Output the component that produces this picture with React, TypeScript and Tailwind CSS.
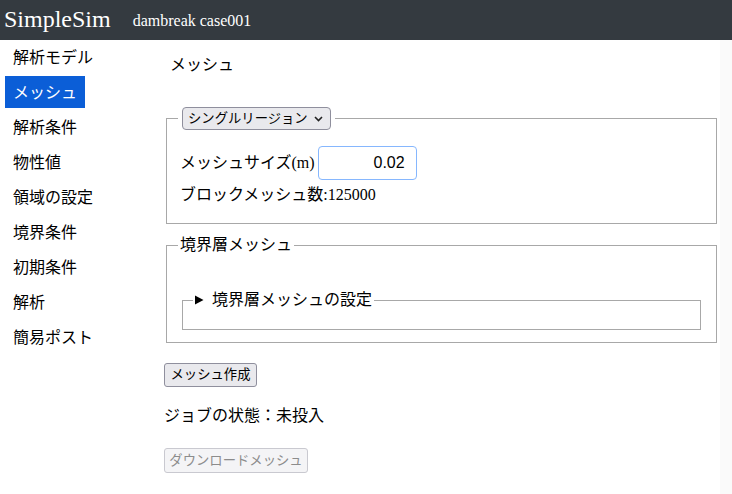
import React from "react";

const navItems = ["解析モデル", "メッシュ", "解析条件", "物性値", "領域の設定", "境界条件", "初期条件", "解析", "簡易ポスト"];
const font = "font-['Liberation_Serif','Noto_Sans_CJK_JP',serif]";
const btnFont = "font-['Liberation_Sans','Noto_Sans_CJK_JP',sans-serif]";

export default function App() {
  return (
    <div className={`w-[732px] h-[494px] bg-white text-black ${font} overflow-hidden flex flex-col`}>
      <header className="h-[40px] bg-[#343a40] text-white flex items-center shrink-0">
        <span className="ml-[4px] text-[24px] leading-[30px] -mt-[2px]">SimpleSim</span>
        <span className="ml-[22px] text-[16px] leading-[20px] mt-[1px]">dambreak case001</span>
      </header>

      <div className="flex flex-1">
        <nav className="w-[164px] shrink-0 pt-[1px] flex flex-col gap-[3px]">
          {navItems.map((item) => (
            <div
              key={item}
              className={
                "ml-[5px] w-fit px-[8px] pt-[7px] pb-[5px] text-[16px] leading-[20px] " +
                (item === "メッシュ" ? "bg-[#0b5ed7] text-white" : "")
              }
            >
              {item}
            </div>
          ))}
        </nav>

        <main className="flex-1 pr-[3px]">
          <h2 className="ml-[6px] mt-[15px] text-[16px] leading-[20px] font-normal">メッシュ</h2>

          <fieldset className="mt-[32px] ml-[2px] border border-[#a8a8a8] pl-[13px] pb-[18px]">
            <legend className="-ml-[2px] px-[4px]">
              <div className={`${btnFont} h-[23px] w-[149px] flex items-center justify-between pl-[5px] pr-[7px] bg-[#e9e9ed] border border-[#8f8f9d] rounded-[4px] text-[13.33px] leading-[16px]`}>
                <span>シングルリージョン</span>
                <svg width="9" height="6" viewBox="0 0 9 6">
                  <path d="M1 1 L4.5 4.5 L8 1" stroke="#222" strokeWidth="1.6" fill="none" />
                </svg>
              </div>
            </legend>
            <div className="mt-[16px] flex items-center text-[16px] leading-[20px]">
              <span>メッシュサイズ(m)</span>
              <div className={`${btnFont} ml-[3px] w-[99px] h-[34px] border border-[#86b7fe] rounded-[4px] flex items-center justify-end pr-[11px] text-[16px]`}>
                0.02
              </div>
            </div>
            <div className="mt-[5px] text-[16px] leading-[20px]">ブロックメッシュ数:125000</div>
          </fieldset>

          <fieldset className="mt-[11px] ml-[2px] border border-[#a8a8a8] pl-[13px] pr-[15px] pb-[12px]">
            <legend className="-ml-[2px] px-[2px] text-[16px] leading-[20px]">境界層メッシュ</legend>
            <fieldset className="mt-[35px] ml-[2px] border border-[#a8a8a8] pl-[10px] pb-[19px]">
              <legend className="px-[2px] text-[16px] leading-[20px] flex items-center">
                <svg width="9" height="10" viewBox="0 0 9 10" className="mr-[8px]">
                  <path d="M0 0.5 L8.5 5 L0 9.5 Z" fill="#000" />
                </svg>
                境界層メッシュの設定
              </legend>
            </fieldset>
          </fieldset>

          <button className={`${btnFont} mt-[20px] h-[24px] w-[93px] bg-[#e9e9ed] border border-[#8f8f9d] rounded-[3px] text-[13.33px] leading-[16px]`}>
            メッシュ作成
          </button>
          <div className="mt-[19px] text-[16px] leading-[20px]">ジョブの状態：未投入</div>
          <button
            disabled
            className={`${btnFont} block mt-[22px] h-[25px] w-[144px] bg-[#f4f4f6] border border-[#c9c9d0] rounded-[3px] text-[13.33px] leading-[16px] text-[#8c8c8c]`}
          >
            ダウンロードメッシュ
          </button>
        </main>

        <div className="w-[12px] bg-[#fafafa] shrink-0" />
      </div>
    </div>
  );
}
